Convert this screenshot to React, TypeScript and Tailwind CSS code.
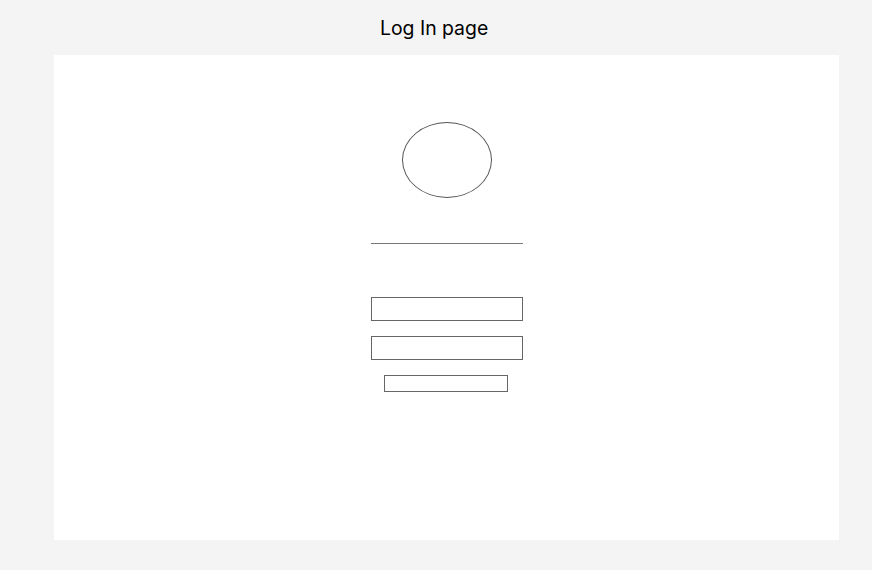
export default function App() {
  return (
    <div className="w-[872px] h-[570px] bg-[#f4f4f4] overflow-hidden" style={{ fontFamily: 'Inter, "Noto Sans", sans-serif' }}>
      <div className="pt-[14px] pl-[380px] h-[55px]">
        <div className="text-[19.4px] leading-[28px] text-black">Log In page</div>
      </div>
      <div className="ml-[54px] w-[785px] h-[485px] bg-white flex flex-col items-center">
        <div className="mt-[67px] w-[90px] h-[76px] rounded-[50%] border border-[#555]" />
        <div className="mt-[45px] w-[152px] h-px bg-[#777]" />
        <div className="mt-[53px] w-[152px] h-[24px] border border-[#666]" />
        <div className="mt-[15px] w-[152px] h-[24px] border border-[#666]" />
        <div className="mt-[15px] mr-[1px] w-[124px] h-[17px] border border-[#666]" />
      </div>
    </div>
  );
}
